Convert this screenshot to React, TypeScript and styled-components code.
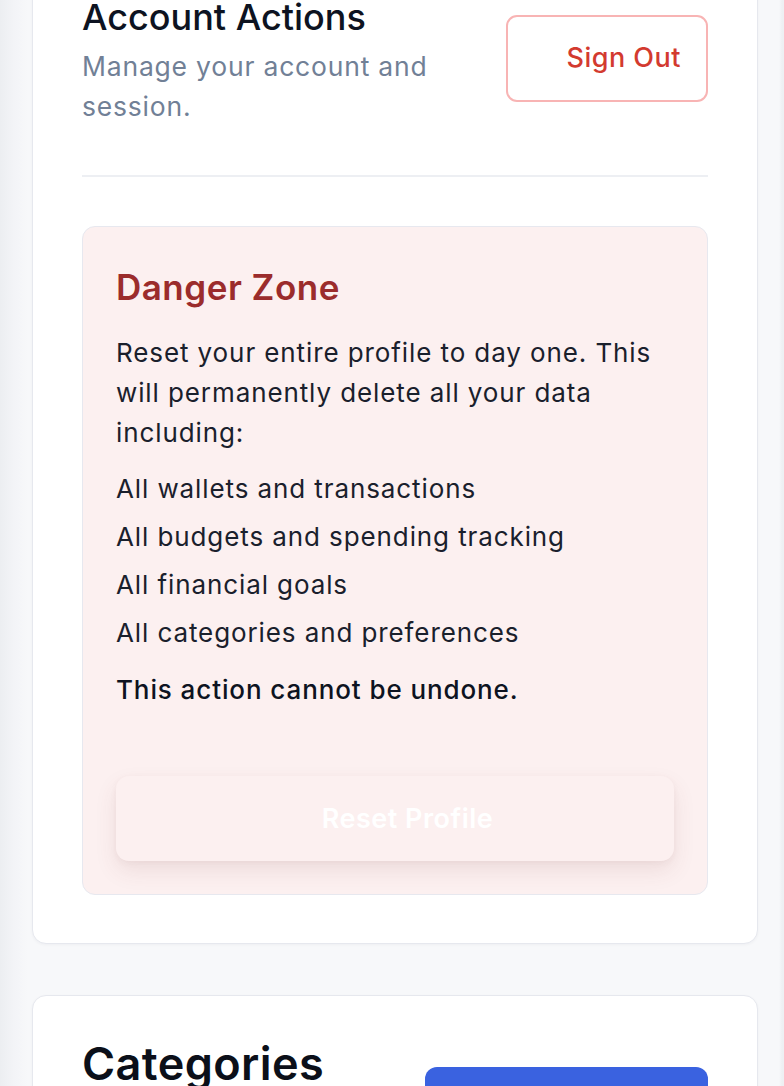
import React from "react";
import styled, { createGlobalStyle } from "styled-components";

const Global = createGlobalStyle`
  html, body { margin: 0; padding: 0; }
  body {
    background: #f7f8fa;
    font-family: Inter, "Noto Sans", "Liberation Sans", sans-serif;
    overflow: hidden;
  }
`;

const Viewport = styled.div`
  height: 1086px;
  overflow: hidden;
  background: linear-gradient(to right, #eceef1 0px, #f3f4f7 14px, #f7f8fa 28px, #f7f8fa 779px, #eef0f3 782px, #eef0f3 784px);
`;

const Page = styled.div`
  display: flex;
  flex-direction: column;
  gap: 51px;
  padding: 0 26px 0 32px;
  margin-top: -60px;
`;

const Card = styled.section<{ $top?: number }>`
  background: #ffffff;
  border: 1px solid #e6e8ee;
  border-radius: 14px;
  box-shadow: 0 1px 3px rgba(15, 23, 42, 0.04);
  padding: ${(p) => p.$top ?? 54}px 49px 48px 49px;
`;

const HeaderRow = styled.div`
  display: flex;
  justify-content: space-between;
  align-items: flex-start;
`;

const TitleBlock = styled.div`
  display: flex;
  flex-direction: column;
  gap: 7px;
  max-width: 390px;
`;

const Title = styled.h2`
  margin: 0;
  font-size: 36px;
  line-height: 44px;
  font-weight: 500;
  color: #0d1321;
`;

const Subtitle = styled.p`
  margin: 0;
  font-size: 26.5px;
  line-height: 40px;
  font-weight: 400;
  letter-spacing: 0.8px;
  color: #718096;
`;

const OutlineButton = styled.button`
  width: 202px;
  height: 87px;
  margin-top: 20px;
  background: #ffffff;
  border: 2px solid #f8b4b4;
  border-radius: 11px;
  font-family: inherit;
  font-size: 27px;
  font-weight: 500;
  letter-spacing: 0.5px;
  color: #d33a2f;
  display: flex;
  align-items: center;
  justify-content: flex-end;
  padding: 0 25px 2px 0;
`;

const Divider = styled.hr`
  border: none;
  height: 2px;
  background: #edeff3;
  margin: 49px 0 49px 0;
`;

const DangerBox = styled.div`
  background: #fcf0f0;
  border: 1.5px solid #e7e8ef;
  border-radius: 13px;
  padding: 38px 33px 33px 33px;
  display: flex;
  flex-direction: column;
`;

const DangerTitle = styled.h3`
  margin: 0 0 24px 0;
  font-size: 35px;
  line-height: 44px;
  font-weight: 600;
  letter-spacing: 0.5px;
  color: #9b2c2c;
`;

const Body = styled.p`
  margin: 0;
  font-size: 26px;
  line-height: 40px;
  letter-spacing: 0.9px;
  color: #1a202c;
`;

const List = styled.ul`
  list-style: none;
  margin: 16px 0 0 0;
  padding: 0;
  display: flex;
  flex-direction: column;
  gap: 8px;
`;

const Item = styled.li`
  font-size: 26px;
  line-height: 40px;
  letter-spacing: 0.9px;
  color: #1a202c;
`;

const Warning = styled.p`
  margin: 17px 0 0 0;
  font-size: 26px;
  line-height: 40px;
  font-weight: 500;
  letter-spacing: 0.9px;
  color: #0d1321;
`;

const ResetButton = styled.button`
  margin-top: 66px;
  height: 85px;
  width: 100%;
  background: #fcf0f0;
  border: none;
  border-radius: 13px;
  box-shadow: 0 10px 22px rgba(120, 60, 60, 0.10), 0 2px 6px rgba(120, 60, 60, 0.05);
  font-family: inherit;
  font-size: 27px;
  font-weight: 600;
  letter-spacing: 0.5px;
  color: #ffffff;
  padding-left: 31px;
`;

const CategoriesRow = styled.div`
  display: flex;
  justify-content: space-between;
  align-items: flex-start;
`;

const BigTitle = styled.h2`
  margin: 0;
  font-size: 45px;
  line-height: 54px;
  font-weight: 600;
  letter-spacing: 0.4px;
  color: #0b0f19;
`;

const PrimaryButton = styled.button`
  width: 283px;
  height: 80px;
  margin-top: 30px;
  background: #3a62e0;
  border: none;
  border-radius: 12px;
`;

export default function App() {
  return (
    <>
      <Global />
      <Viewport>
        <Page>
          <Card>
            <HeaderRow>
              <TitleBlock>
                <Title>Account Actions</Title>
                <Subtitle>Manage your account and session.</Subtitle>
              </TitleBlock>
              <OutlineButton>Sign Out</OutlineButton>
            </HeaderRow>
            <Divider />
            <DangerBox>
              <DangerTitle>Danger Zone</DangerTitle>
              <Body>
                Reset your entire profile to day one. This will permanently delete all your data including:
              </Body>
              <List>
                <Item>All wallets and transactions</Item>
                <Item>All budgets and spending tracking</Item>
                <Item>All financial goals</Item>
                <Item>All categories and preferences</Item>
              </List>
              <Warning>This action cannot be undone.</Warning>
              <ResetButton>Reset Profile</ResetButton>
            </DangerBox>
          </Card>
          <Card $top={41}>
            <CategoriesRow>
              <BigTitle>Categories</BigTitle>
              <PrimaryButton aria-label="Add category" />
            </CategoriesRow>
          </Card>
        </Page>
      </Viewport>
    </>
  );
}
